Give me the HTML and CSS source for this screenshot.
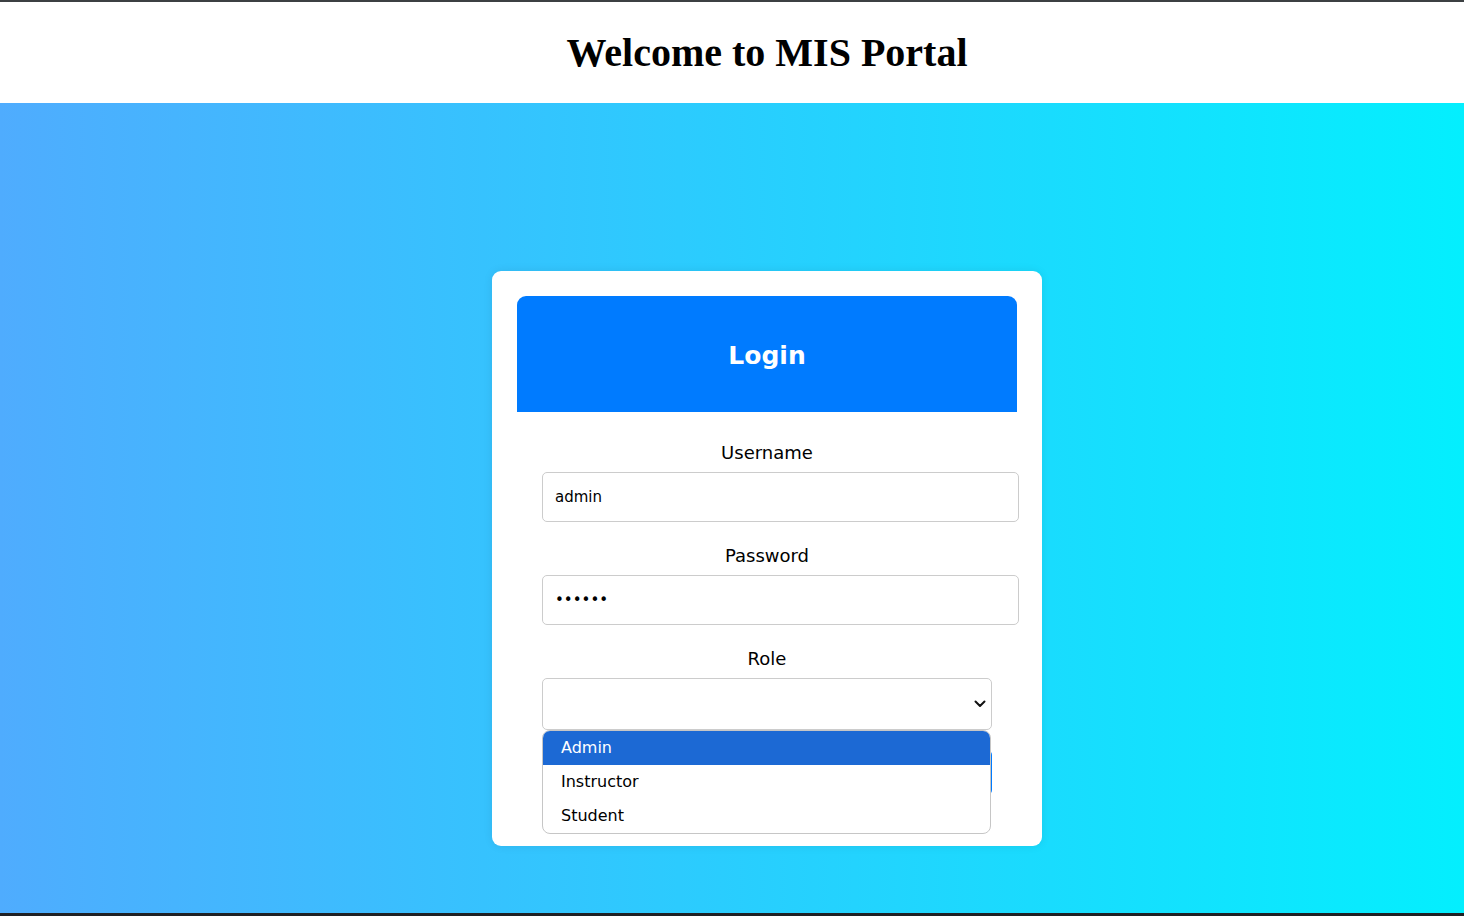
FILE: index.html
```html
<!DOCTYPE html>
<html lang="en">
<head>
<meta charset="utf-8">
<title>MIS Portal</title>
<link rel="stylesheet" href="styles.css">
</head>
<body>
  <header class="site-header">
    <h1 class="site-title">Welcome to MIS Portal</h1>
  </header>
  <main class="stage">
    <section class="card">
      <div class="card-head">
        <h2 class="card-title">Login</h2>
      </div>
      <form class="login-form">
        <label class="field-label" for="username">Username</label>
        <input class="field-input" id="username" type="text" value="admin">
        <label class="field-label" for="password">Password</label>
        <input class="field-input" id="password" type="password" value="123456">
        <label class="field-label">Role</label>
        <div class="select-wrap">
          <div class="select-box">
            <span class="select-value"></span>
            <svg class="chevron" width="12" height="8" viewBox="0 0 12 8"><path d="M1.5 1.5 L6 6 L10.5 1.5" fill="none" stroke="#111" stroke-width="2" stroke-linecap="round" stroke-linejoin="round"/></svg>
          </div>
          <ul class="select-popup">
            <li class="opt opt-active">Admin</li>
            <li class="opt">Instructor</li>
            <li class="opt">Student</li>
          </ul>
        </div>
        <button class="login-btn" type="button">Login</button>
      </form>
    </section>
  </main>
</body>
</html>
```

FILE: styles.css
```css
* { box-sizing: border-box; }

html, body {
  margin: 0;
  padding: 0;
}

html {
  overflow: hidden;
  background: #202124;
}

body {
  width: 1534px;
  height: 916px;
  background: #202124;
  border-top: 2px solid #3c4043;
  display: flex;
  flex-direction: column;
  overflow: hidden;
  font-family: "Comic Sans MS", "DejaVu Sans", sans-serif;
}

.site-header {
  height: 101px;
  background: #ffffff;
  padding-top: 28px;
}

.site-title {
  margin: 0;
  text-align: center;
  font-family: "Liberation Serif", "Times New Roman", serif;
  font-weight: bold;
  font-size: 40px;
  line-height: 46px;
  color: #000;
}

.stage {
  height: 810px;
  background: linear-gradient(to right, #4facfe 0%, #00f2fe 100%);
  display: flex;
  justify-content: center;
  align-items: flex-start;
  padding-top: 168px;
}

.card {
  width: 550px;
  background: #ffffff;
  border-radius: 9px;
  padding: 25px;
  box-shadow: 0 0 10px rgba(0, 0, 0, 0.08);
}

.card-head {
  height: 116px;
  background: #007bff;
  border-radius: 9px 9px 0 0;
  display: flex;
  align-items: center;
  justify-content: center;
}

.card-title {
  margin: 0;
  color: #ffffff;
  font-size: 25px;
  font-weight: bold;
  line-height: 30px;
  padding-top: 4px;
}

.login-form {
  padding: 30px 25px 26px;
  display: flex;
  flex-direction: column;
}

.field-label {
  display: block;
  text-align: center;
  font-size: 18px;
  line-height: 22px;
  color: #000;
  margin-bottom: 8px;
}

.field-input {
  display: block;
  width: 477px;
  height: 50px;
  margin: 0 0 23px;
  padding: 0 12px;
  border: 1px solid #cccccc;
  border-radius: 5px;
  font-family: inherit;
  font-size: 15px;
  color: #000;
  background: #fff;
  outline: none;
}

.select-wrap {
  position: relative;
  width: 450px;
  margin-bottom: 20px;
}

.select-box {
  height: 52px;
  border: 1px solid #cccccc;
  border-radius: 5px;
  background: #fff;
  display: flex;
  align-items: center;
  justify-content: space-between;
  padding: 0 5px 0 12px;
}

.chevron {
  display: block;
}

.select-popup {
  position: absolute;
  top: 100%;
  left: 0;
  width: 449px;
  margin: 0;
  padding: 0;
  list-style: none;
  background: #fff;
  border: 1px solid #c6c6c6;
  border-radius: 8px;
  overflow: hidden;
  z-index: 2;
}

.opt {
  height: 34px;
  line-height: 34px;
  padding-left: 18px;
  font-size: 16px;
  color: #000;
}

.opt-active {
  background: #1c69d4;
  color: #fff;
}

.login-btn {
  height: 45px;
  width: 450px;
  border: none;
  border-radius: 5px;
  background: #007bff;
  color: #fff;
  font-family: inherit;
  font-size: 16px;
}
```
